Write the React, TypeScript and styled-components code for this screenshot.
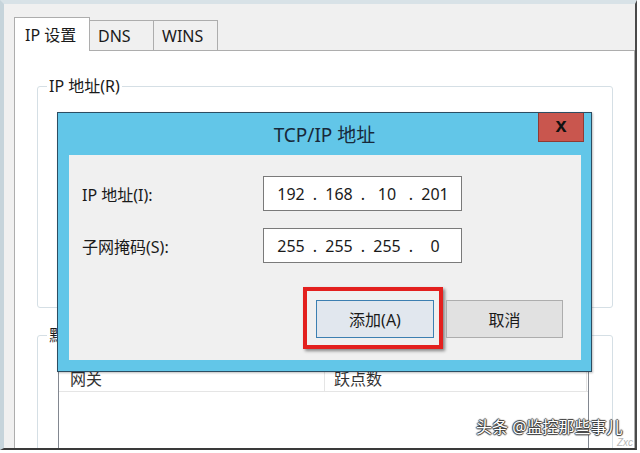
import styled, { createGlobalStyle } from "styled-components";

const GlobalStyle = createGlobalStyle`
  html, body {
    margin: 0;
    padding: 0;
    background: #ffffff;
  }
  body {
    font-family: "Noto Sans", "Noto Sans CJK SC", sans-serif;
    color: #1a1a1a;
  }
  * {
    box-sizing: border-box;
  }
`;

const FONT = `"Noto Sans", "Noto Sans CJK SC", sans-serif`;

const ipAddress = ["192", "168", "10", "201"];
const subnetMask = ["255", "255", "255", "0"];


function IpBox({ octets }: { octets: string[] }) {
    return (
        <IpInput>
            {octets.map((octet, i) => (
                <IpPart key={i}>
                    <Octet>{octet}</Octet>
                    {i < octets.length - 1 && <Dot>.</Dot>}
                </IpPart>
            ))}
        </IpInput>
    );
}


export default function App() {
    return (
        <Screen>
            <GlobalStyle />
            <Window>
                <TabStrip>
                    <Tab $active>IP 设置</Tab>
                    <Tab>DNS</Tab>
                    <Tab>WINS</Tab>
                </TabStrip>
                <Panel>
                    <GroupBox $height={233}>
                        <Legend>IP 地址(R)</Legend>
                    </GroupBox>
                    <GroupBox $height={220} $gap={16}>
                        <Legend>默认网关(F):</Legend>
                        <ListView>
                            <ListHeader>
                                <HeaderCell $width={266} $pad={11}>网关</HeaderCell>
                                <HeaderCell $width={262} $pad={9}>跃点数</HeaderCell>
                            </ListHeader>
                        </ListView>
                    </GroupBox>
                </Panel>
            </Window>

            <Dialog>
                <TitleBar>
                    <Title>TCP/IP 地址</Title>
                    <CloseButton>x</CloseButton>
                </TitleBar>
                <DialogBody>
                    <FieldRow>
                        <FieldLabel>IP 地址(I):</FieldLabel>
                        <IpBox octets={ipAddress} />
                    </FieldRow>
                    <FieldRow>
                        <FieldLabel>子网掩码(S):</FieldLabel>
                        <IpBox octets={subnetMask} />
                    </FieldRow>
                    <ButtonRow>
                        <DialogButton $primary $highlight>添加(A)</DialogButton>
                        <DialogButton>取消</DialogButton>
                    </ButtonRow>
                </DialogBody>
            </Dialog>

            <Watermark>头条 @监控那些事儿</Watermark>
            <Signature>Zxc</Signature>
        </Screen>
    );
}


const Screen = styled.div`
    position: relative;
    width: 640px;
    height: 453px;
    overflow: hidden;
    background: #ffffff;
    font-family: ${FONT};
`;

const Window = styled.div`
    width: 637px;
    height: 450px;
    display: flex;
    flex-direction: column;
    padding: 13px 0 0 10px;
    background: #f0f0f0;
    border-top: 4px solid #d8e2e7;
    border-left: 4px solid #c6d4db;
    border-right: 2px solid #4a4a4a;
    border-bottom: 2px solid #3a3a3a;
`;

const TabStrip = styled.div`
    height: 33px;
    display: flex;
    align-items: flex-end;
`;

const Tab = styled.div<{ $active?: boolean }>`
    position: relative;
    z-index: ${p => (p.$active ? 2 : 1)};
    display: flex;
    align-items: center;
    height: ${p => (p.$active ? "34px" : "30px")};
    margin-bottom: ${p => (p.$active ? "-1px" : "0")};
    margin-left: ${p => (p.$active ? "0" : "-1px")};
    padding: ${p => (p.$active ? "0 10px 2px" : "0 8px")};
    min-width: ${p => (p.$active ? "76px" : "65px")};
    background: ${p => (p.$active ? "#ffffff" : "#f0f0f0")};
    border: 1px solid #adadad;
    border-bottom: none;
    font-size: 16px;
    color: #1a1a1a;
    white-space: nowrap;
`;

const Panel = styled.div`
    flex: 1;
    display: flex;
    flex-direction: column;
    padding: 24px 21px 0 22px;
    background: #ffffff;
    border: 1px solid #adadad;
    border-bottom: none;
    overflow: hidden;
`;

const GroupBox = styled.fieldset<{ $height: number; $gap?: number }>`
    flex: none;
    height: ${p => p.$height}px;
    margin: ${p => p.$gap ?? 0}px 0 0;
    padding: 21px 23px 0 20px;
    border: 1px solid #d5dfe5;
    border-radius: 3px;
    min-width: 0;
`;

const Legend = styled.legend`
    margin-left: -11px;
    padding: 0 2px;
    font-size: 16px;
    line-height: 22px;
    color: #1a1a1a;
    white-space: nowrap;
`;

const ListView = styled.div`
    height: 200px;
    border: 1px solid #828790;
    background: #ffffff;
`;

const ListHeader = styled.div`
    display: flex;
    height: 24px;
    border-bottom: 1px solid #e5e5e5;
`;

const HeaderCell = styled.div<{ $width: number; $pad: number }>`
    width: ${p => p.$width}px;
    padding-left: ${p => p.$pad}px;
    border-right: 1px solid #e5e5e5;
    font-size: 16px;
    line-height: 23px;
    color: #333333;
`;

const Dialog = styled.div`
    position: absolute;
    left: 57px;
    top: 112px;
    width: 535px;
    height: 260px;
    display: flex;
    flex-direction: column;
    background: #62c6e8;
    border: 1px solid #2c4d62;
    box-shadow: 1px 1px 2px rgba(0, 0, 0, 0.25);
`;

const TitleBar = styled.div`
    height: 42px;
    display: grid;
    grid-template-columns: 1fr auto 1fr;
`;

const Title = styled.div`
    grid-column: 2;
    align-self: center;
    font-size: 19px;
    color: #18293a;
    white-space: nowrap;
`;

const CloseButton = styled.div`
    grid-column: 3;
    justify-self: end;
    align-self: start;
    width: 46px;
    height: 29px;
    margin-right: 7px;
    display: flex;
    align-items: center;
    justify-content: center;
    padding-bottom: 4px;
    background: #c9564e;
    border: 1px solid #8f3a33;
    border-top: none;
    font-family: "Liberation Sans", Arial, sans-serif;
    font-size: 20px;
    font-weight: bold;
    color: #111111;
`;

const DialogBody = styled.div`
    flex: 1;
    margin: 0 10px 11px 11px;
    padding: 21px 18px 22px 13px;
    display: flex;
    flex-direction: column;
    gap: 17px;
    background: #f0f0f0;
`;

const FieldRow = styled.div`
    display: flex;
    align-items: center;
`;

const FieldLabel = styled.div`
    width: 181px;
    font-size: 16px;
    color: #1a1a1a;
    white-space: nowrap;
`;

const IpInput = styled.div`
    width: 199px;
    height: 35px;
    display: flex;
    align-items: center;
    padding-left: 9px;
    background: #ffffff;
    border: 1px solid #7a7a7a;
`;

const IpPart = styled.div`
    display: flex;
`;

const Octet = styled.span`
    width: 36px;
    text-align: center;
    font-size: 16px;
    color: #1a1a1a;
`;

const Dot = styled.span`
    width: 12px;
    text-align: center;
    font-size: 16px;
    color: #1a1a1a;
`;

const ButtonRow = styled.div`
    margin-top: 20px;
    display: flex;
    justify-content: flex-end;
    gap: 12px;
`;

const DialogButton = styled.div<{ $primary?: boolean; $highlight?: boolean }>`
    position: relative;
    width: ${p => (p.$primary ? "118px" : "117px")};
    height: 38px;
    display: flex;
    align-items: center;
    justify-content: center;
    background: ${p => (p.$primary ? "#e1e7ee" : "#e1e1e1")};
    border: 1px solid ${p => (p.$primary ? "#3c7fb1" : "#adadad")};
    font-size: 16px;
    color: #1a1a1a;

    ${p => p.$highlight && `
        &::after {
            content: "";
            position: absolute;
            left: -14px;
            top: -14px;
            right: -10px;
            bottom: -12px;
            border: 4px solid #e3201e;
            box-shadow: 2px 2px 3px rgba(0, 0, 0, 0.45);
            pointer-events: none;
        }
    `}
`;

const Watermark = styled.div`
    position: absolute;
    left: 476px;
    top: 417px;
    font-size: 16px;
    line-height: 20px;
    color: #ffffff;
    white-space: nowrap;
    text-shadow:
        -1px 0 1px #333, 1px 0 1px #333,
        0 -1px 1px #333, 0 1px 1px #333;
`;

const Signature = styled.div`
    position: absolute;
    left: 617px;
    top: 438px;
    font-family: "Liberation Sans", Arial, sans-serif;
    font-size: 10px;
    line-height: 10px;
    font-style: italic;
    color: #b8b8b8;
`;
